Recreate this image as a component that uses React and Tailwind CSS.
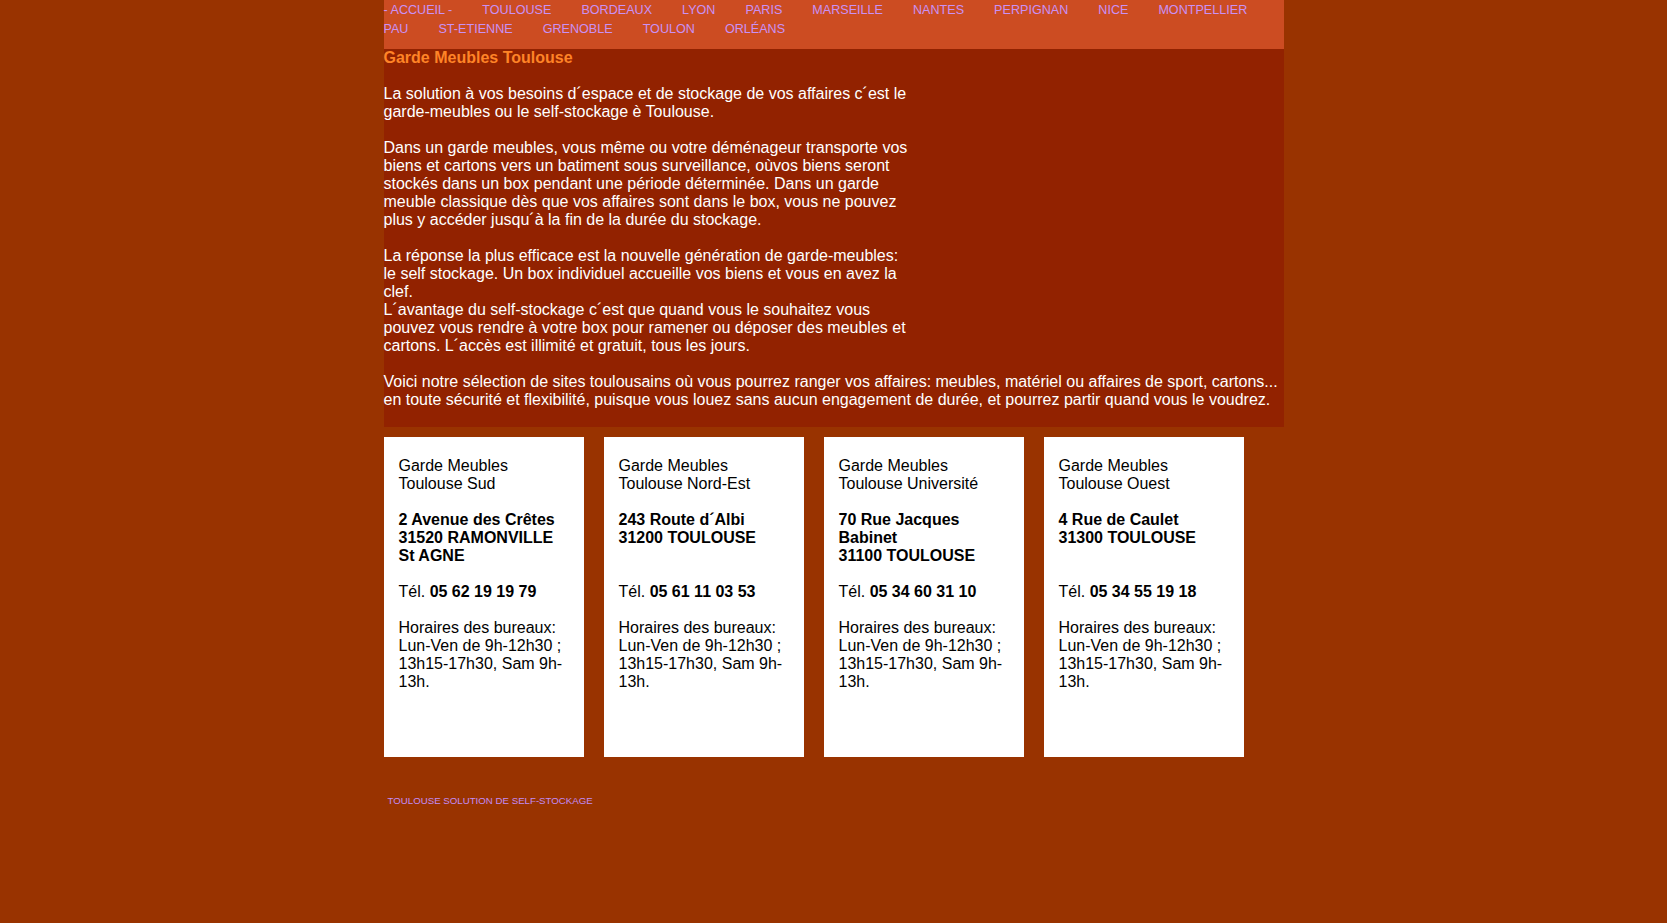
import React from 'react';

const villes = [
    '- ACCUEIL -', 'TOULOUSE', 'BORDEAUX', 'LYON', 'PARIS', 'MARSEILLE', 'NANTES', 'PERPIGNAN',
    'NICE', 'MONTPELLIER', 'PAU', 'ST-ETIENNE', 'GRENOBLE', 'TOULON', 'ORLÉANS',
];

const sites = [
    { nom: ['Garde Meubles', 'Toulouse Sud'], adresse: ['2 Avenue des Crêtes', '31520 RAMONVILLE St AGNE'], tel: '05 62 19 19 79' },
    { nom: ['Garde Meubles', 'Toulouse Nord-Est'], adresse: ['243 Route d´Albi', '31200 TOULOUSE', '\u00a0'], tel: '05 61 11 03 53' },
    { nom: ['Garde Meubles', 'Toulouse Université'], adresse: ['70 Rue Jacques Babinet', '31100 TOULOUSE'], tel: '05 34 60 31 10' },
    { nom: ['Garde Meubles', 'Toulouse Ouest'], adresse: ['4 Rue de Caulet', '31300 TOULOUSE', '\u00a0'], tel: '05 34 55 19 18' },
];

const App = () => {
    return (
        <div className="min-h-screen bg-[#993300] font-['Liberation_Sans',Arial,sans-serif]">
            <div className="w-[900px] mx-auto">
                {/* Menu villes */}
                <nav className="bg-[#cc4c22] h-[49px] pt-[1px] flex flex-wrap content-start text-[12.6px] leading-[19px] text-[#c991f5]">
                    {villes.map((v) => (
                        <a key={v} className="mr-[30px] whitespace-nowrap">{v}</a>
                    ))}
                </nav>

                {/* Texte */}
                <div className="bg-[#922200] text-white text-[16px] leading-[18px] pb-[18px]">
                    <div className="w-[530px]">
                        <h1 className="font-bold text-[#ff8427]">Garde Meubles Toulouse</h1>
                        <br />
                        <p>La solution à vos besoins d´espace et de stockage de vos affaires c´est le garde-meubles ou le self-stockage è Toulouse.</p>
                        <br />
                        <p>Dans un garde meubles, vous même ou votre déménageur transporte vos biens et cartons vers un batiment sous surveillance, oùvos biens seront stockés dans un box pendant une période déterminée. Dans un garde meuble classique dès que vos affaires sont dans le box, vous ne pouvez plus y accéder jusqu´à la fin de la durée du stockage.</p>
                        <br />
                        <p>La réponse la plus efficace est la nouvelle génération de garde-meubles: le self stockage. Un box individuel accueille vos biens et vous en avez la clef.</p>
                        <p>L´avantage du self-stockage c´est que quand vous le souhaitez vous pouvez vous rendre à votre box pour ramener ou déposer des meubles et cartons. L´accès est illimité et gratuit, tous les jours.</p>
                        <br />
                    </div>
                    <p>Voici notre sélection de sites toulousains où vous pourrez ranger vos affaires: meubles, matériel ou affaires de sport, cartons... en toute sécurité et flexibilité, puisque vous louez sans aucun engagement de durée, et pourrez partir quand vous le voudrez.</p>
                </div>

                {/* Sites */}
                <div className="flex gap-[20px] mt-[10px]">
                    {sites.map((s, i) => (
                        <div key={i} className="w-[200px] h-[320px] bg-white px-[15px] pt-[20px] text-black text-[16px] leading-[18px]">
                            <p>{s.nom[0]}<br />{s.nom[1]}</p>
                            <br />
                            <p className="font-bold">
                                {s.adresse.map((l, j) => (
                                    <span key={j} className="block">{l}</span>
                                ))}
                            </p>
                            <br />
                            <p>Tél. <b>{s.tel}</b></p>
                            <br />
                            <p>Horaires des bureaux: Lun-Ven de 9h-12h30 ; 13h15-17h30, Sam 9h-13h.</p>
                        </div>
                    ))}
                </div>

                <div className="mt-[38px] pl-[4px] text-[9.7px] leading-[12px] text-[#c28cf5]">
                    TOULOUSE SOLUTION DE SELF-STOCKAGE
                </div>
            </div>
        </div>
    );
};

export default App;
